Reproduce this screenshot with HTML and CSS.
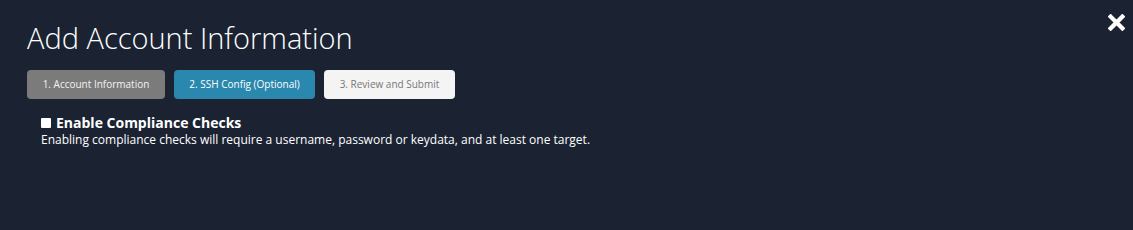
FILE: index.html
```html
<!DOCTYPE html>
<html lang="en">
<head>
    <meta charset="UTF-8">
    <title>Add Account Information</title>
    <link rel="stylesheet" href="styles.css">
</head>
<body>
    <div class="modal">
        <button class="close" aria-label="Close">
            <svg width="17" height="17" viewBox="0 0 16 16">
                <path d="M2.5 2.5 L13.5 13.5 M13.5 2.5 L2.5 13.5" stroke="#fff" stroke-width="4" stroke-linecap="square"/>
            </svg>
        </button>
        <h1 class="title">Add Account Information</h1>
        <div class="steps">
            <div class="step done">1. Account Information</div>
            <div class="step active">2. SSH Config (Optional)</div>
            <div class="step todo">3. Review and Submit</div>
        </div>
        <div class="compliance">
            <label class="check-label">
                <span class="box"></span>
                Enable Compliance Checks
            </label>
            <p class="hint">Enabling compliance checks will require a username, password or keydata, and at least one target.</p>
        </div>
    </div>
</body>
</html>
```

FILE: styles.css
```css
* {
    margin: 0;
    padding: 0;
    box-sizing: border-box;
}

body {
    background-color: #1b2333;
    font-family: "Open Sans", sans-serif;
    color: #fff;
    height: 230px;
    overflow: hidden;
}

.modal {
    position: relative;
    padding: 18px 27px;
}

.close {
    position: absolute;
    top: 14px;
    right: 8px;
    background: none;
    border: none;
    cursor: pointer;
}

.title {
    font-size: 29px;
    font-weight: 300;
    line-height: 40px;
    margin-bottom: 12px;
}

.steps {
    display: flex;
    gap: 9px;
}

.step {
    height: 29px;
    line-height: 29px;
    font-size: 10px;
    border-radius: 4px;
    text-align: center;
    white-space: nowrap;
}

.step.done {
    background-color: #7b7b7b;
    color: #f2f2f2;
    width: 138px;
}

.step.active {
    background-color: #2a87ad;
    color: #fff;
    width: 141px;
}

.step.todo {
    background-color: #f4f4f4;
    color: #777;
    width: 131px;
}

.compliance {
    padding: 15px 14px 0;
}

.check-label {
    display: flex;
    align-items: center;
    gap: 5px;
    font-size: 14px;
    font-weight: 700;
    line-height: 17px;
}

.box {
    display: inline-block;
    width: 10px;
    height: 10px;
    background-color: #fff;
    border-radius: 1px;
}

.hint {
    font-size: 12px;
    line-height: 18px;
}
```
